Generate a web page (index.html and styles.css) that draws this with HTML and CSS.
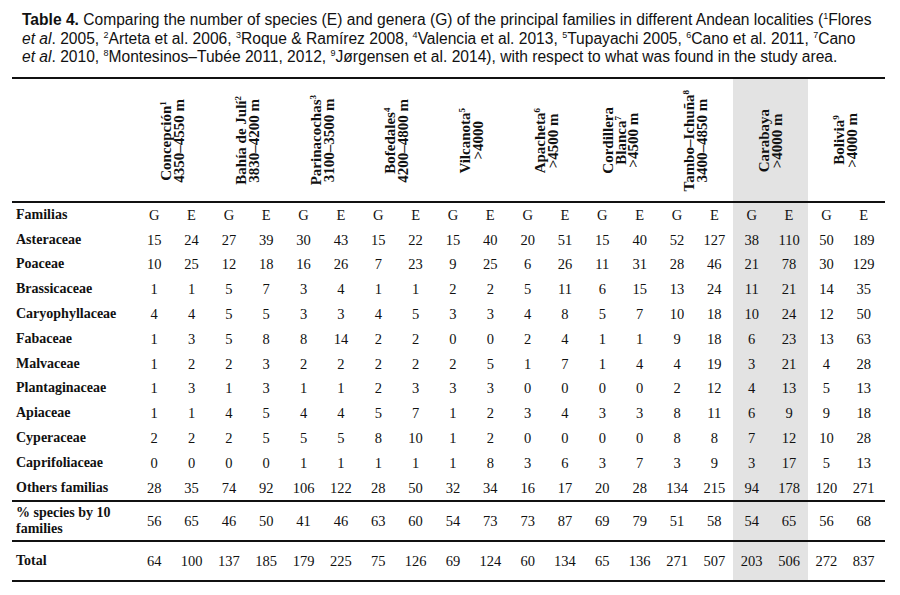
FILE: index.html
```html
<!DOCTYPE html>
<html>
<head>
<meta charset="utf-8">
<link rel="stylesheet" href="styles.css">
</head>
<body>
<p class="caption"><b>Table 4.</b> Comparing the number of species (E) and genera (G) of the principal families in different Andean localities (<sup>1</sup>Flores<br><i>et al</i>. 2005, <sup>2</sup>Arteta et al. 2006, <sup>3</sup>Roque &amp; Ramírez 2008, <sup>4</sup>Valencia et al. 2013, <sup>5</sup>Tupayachi 2005, <sup>6</sup>Cano et al. 2011, <sup>7</sup>Cano<br><i>et al</i>. 2010, <sup>8</sup>Montesinos–Tubée 2011, 2012, <sup>9</sup>Jørgensen et al. 2014), with respect to what was found in the study area.</p>
<table class="data">
<colgroup>
<col class="c-label">
<col class="c-num"><col class="c-num"><col class="c-num"><col class="c-num"><col class="c-num">
<col class="c-num"><col class="c-num"><col class="c-num"><col class="c-num"><col class="c-num">
<col class="c-num"><col class="c-num"><col class="c-num"><col class="c-num"><col class="c-num">
<col class="c-num"><col class="c-num"><col class="c-num"><col class="c-num"><col class="c-num">
<col class="c-pad">
</colgroup>
<thead>
<tr class="head">
<th></th>
<th colspan="2"><span class="vt">Concepción<sup>1</sup><br>4350–4550 m</span></th>
<th colspan="2"><span class="vt">Bahía de Julí<sup>2</sup><br>3830–4200 m</span></th>
<th colspan="2"><span class="vt">Parinacochas<sup>3</sup><br>3100–3500 m</span></th>
<th colspan="2"><span class="vt">Bofedales<sup>4</sup><br>4200–4800 m</span></th>
<th colspan="2"><span class="vt">Vilcanota<sup>5</sup><br>&gt;4000</span></th>
<th colspan="2"><span class="vt">Apacheta<sup>6</sup><br>&gt;4500 m</span></th>
<th colspan="2"><span class="vt">Cordillera<br>Blanca<sup>7</sup><br>&gt;4500 m</span></th>
<th colspan="2"><span class="vt">Tambo–Ichuña<sup>8</sup><br>3400–4850 m</span></th>
<th colspan="2" class="hl"><span class="vt">Carabaya<br>&gt;4000 m</span></th>
<th colspan="2"><span class="vt">Bolivia<sup>9</sup><br>&gt;4000 m</span></th>
<th></th>
</tr>
</thead>
<tbody>
<tr class="row"><td class="lbl">Familias</td><td>G</td><td>E</td><td>G</td><td>E</td><td>G</td><td>E</td><td>G</td><td>E</td><td>G</td><td>E</td><td>G</td><td>E</td><td>G</td><td>E</td><td>G</td><td>E</td><td class="hl">G</td><td class="hl">E</td><td>G</td><td>E</td><td></td></tr>
<tr class="row"><td class="lbl">Asteraceae</td><td>15</td><td>24</td><td>27</td><td>39</td><td>30</td><td>43</td><td>15</td><td>22</td><td>15</td><td>40</td><td>20</td><td>51</td><td>15</td><td>40</td><td>52</td><td>127</td><td class="hl">38</td><td class="hl">110</td><td>50</td><td>189</td><td></td></tr>
<tr class="row"><td class="lbl">Poaceae</td><td>10</td><td>25</td><td>12</td><td>18</td><td>16</td><td>26</td><td>7</td><td>23</td><td>9</td><td>25</td><td>6</td><td>26</td><td>11</td><td>31</td><td>28</td><td>46</td><td class="hl">21</td><td class="hl">78</td><td>30</td><td>129</td><td></td></tr>
<tr class="row"><td class="lbl">Brassicaceae</td><td>1</td><td>1</td><td>5</td><td>7</td><td>3</td><td>4</td><td>1</td><td>1</td><td>2</td><td>2</td><td>5</td><td>11</td><td>6</td><td>15</td><td>13</td><td>24</td><td class="hl">11</td><td class="hl">21</td><td>14</td><td>35</td><td></td></tr>
<tr class="row"><td class="lbl">Caryophyllaceae</td><td>4</td><td>4</td><td>5</td><td>5</td><td>3</td><td>3</td><td>4</td><td>5</td><td>3</td><td>3</td><td>4</td><td>8</td><td>5</td><td>7</td><td>10</td><td>18</td><td class="hl">10</td><td class="hl">24</td><td>12</td><td>50</td><td></td></tr>
<tr class="row"><td class="lbl">Fabaceae</td><td>1</td><td>3</td><td>5</td><td>8</td><td>8</td><td>14</td><td>2</td><td>2</td><td>0</td><td>0</td><td>2</td><td>4</td><td>1</td><td>1</td><td>9</td><td>18</td><td class="hl">6</td><td class="hl">23</td><td>13</td><td>63</td><td></td></tr>
<tr class="row"><td class="lbl">Malvaceae</td><td>1</td><td>2</td><td>2</td><td>3</td><td>2</td><td>2</td><td>2</td><td>2</td><td>2</td><td>5</td><td>1</td><td>7</td><td>1</td><td>4</td><td>4</td><td>19</td><td class="hl">3</td><td class="hl">21</td><td>4</td><td>28</td><td></td></tr>
<tr class="row"><td class="lbl">Plantaginaceae</td><td>1</td><td>3</td><td>1</td><td>3</td><td>1</td><td>1</td><td>2</td><td>3</td><td>3</td><td>3</td><td>0</td><td>0</td><td>0</td><td>0</td><td>2</td><td>12</td><td class="hl">4</td><td class="hl">13</td><td>5</td><td>13</td><td></td></tr>
<tr class="row"><td class="lbl">Apiaceae</td><td>1</td><td>1</td><td>4</td><td>5</td><td>4</td><td>4</td><td>5</td><td>7</td><td>1</td><td>2</td><td>3</td><td>4</td><td>3</td><td>3</td><td>8</td><td>11</td><td class="hl">6</td><td class="hl">9</td><td>9</td><td>18</td><td></td></tr>
<tr class="row"><td class="lbl">Cyperaceae</td><td>2</td><td>2</td><td>2</td><td>5</td><td>5</td><td>5</td><td>8</td><td>10</td><td>1</td><td>2</td><td>0</td><td>0</td><td>0</td><td>0</td><td>8</td><td>8</td><td class="hl">7</td><td class="hl">12</td><td>10</td><td>28</td><td></td></tr>
<tr class="row"><td class="lbl">Caprifoliaceae</td><td>0</td><td>0</td><td>0</td><td>0</td><td>1</td><td>1</td><td>1</td><td>1</td><td>1</td><td>8</td><td>3</td><td>6</td><td>3</td><td>7</td><td>3</td><td>9</td><td class="hl">3</td><td class="hl">17</td><td>5</td><td>13</td><td></td></tr>
<tr class="row"><td class="lbl">Others familias</td><td>28</td><td>35</td><td>74</td><td>92</td><td>106</td><td>122</td><td>28</td><td>50</td><td>32</td><td>34</td><td>16</td><td>17</td><td>20</td><td>28</td><td>134</td><td>215</td><td class="hl">94</td><td class="hl">178</td><td>120</td><td>271</td><td></td></tr>
<tr class="row tall"><td class="lbl">% species by 10 families</td><td>56</td><td>65</td><td>46</td><td>50</td><td>41</td><td>46</td><td>63</td><td>60</td><td>54</td><td>73</td><td>73</td><td>87</td><td>69</td><td>79</td><td>51</td><td>58</td><td class="hl">54</td><td class="hl">65</td><td>56</td><td>68</td><td></td></tr>
<tr class="row tall last"><td class="lbl">Total</td><td>64</td><td>100</td><td>137</td><td>185</td><td>179</td><td>225</td><td>75</td><td>126</td><td>69</td><td>124</td><td>60</td><td>134</td><td>65</td><td>136</td><td>271</td><td>507</td><td class="hl">203</td><td class="hl">506</td><td>272</td><td>837</td><td></td></tr>
</tbody>
</table>
</body>
</html>
```
FILE: styles.css
```css
html, body {
  margin: 0;
  padding: 0;
  background: #ffffff;
  color: #000000;
}

.caption {
  margin: 0;
  padding: 11px 0 0 22px;
  font-family: "Liberation Sans", Arial, sans-serif;
  font-size: 15.6px;
  line-height: 18.5px;
  color: #111111;
  white-space: nowrap;
}

.caption sup {
  font-size: 9px;
  line-height: 0;
  vertical-align: 6px;
}

.data {
  margin: 10px 0 0 12px;
  width: 873px;
  table-layout: fixed;
  border-collapse: separate;
  border-spacing: 0;
  font-family: "Liberation Serif", "Times New Roman", serif;
  font-size: 14px;
  color: #111111;
}

.c-label { width: 123.5px; }
.c-num { width: 37.35px; }
.c-pad { width: 2.5px; }

.data th,
.data td {
  box-sizing: border-box;
  padding: 0;
  text-align: center;
  vertical-align: middle;
}

.head th {
  height: 126px;
  border-top: 2px solid #111111;
  border-bottom: 2px solid #111111;
}

.vt {
  display: inline-block;
  margin-top: 6px;
  writing-mode: vertical-rl;
  transform: rotate(180deg);
  font-size: 15px;
  font-weight: bold;
  line-height: 12.5px;
  text-align: center;
  white-space: nowrap;
}

.vt sup {
  font-size: 9px;
  line-height: 0;
  vertical-align: 3px;
}

.row td {
  height: 24.8px;
  line-height: 16px;
  font-size: 14.5px;
}

.row .lbl {
  text-align: left;
  padding-left: 4px;
  font-weight: bold;
  font-size: 14px;
}

.tall td {
  height: 40px;
  border-top: 2px solid #111111;
}

.last td {
  height: 42px;
  border-bottom: 2px solid #111111;
}

.hl {
  background: #e3e3e3;
}
```
